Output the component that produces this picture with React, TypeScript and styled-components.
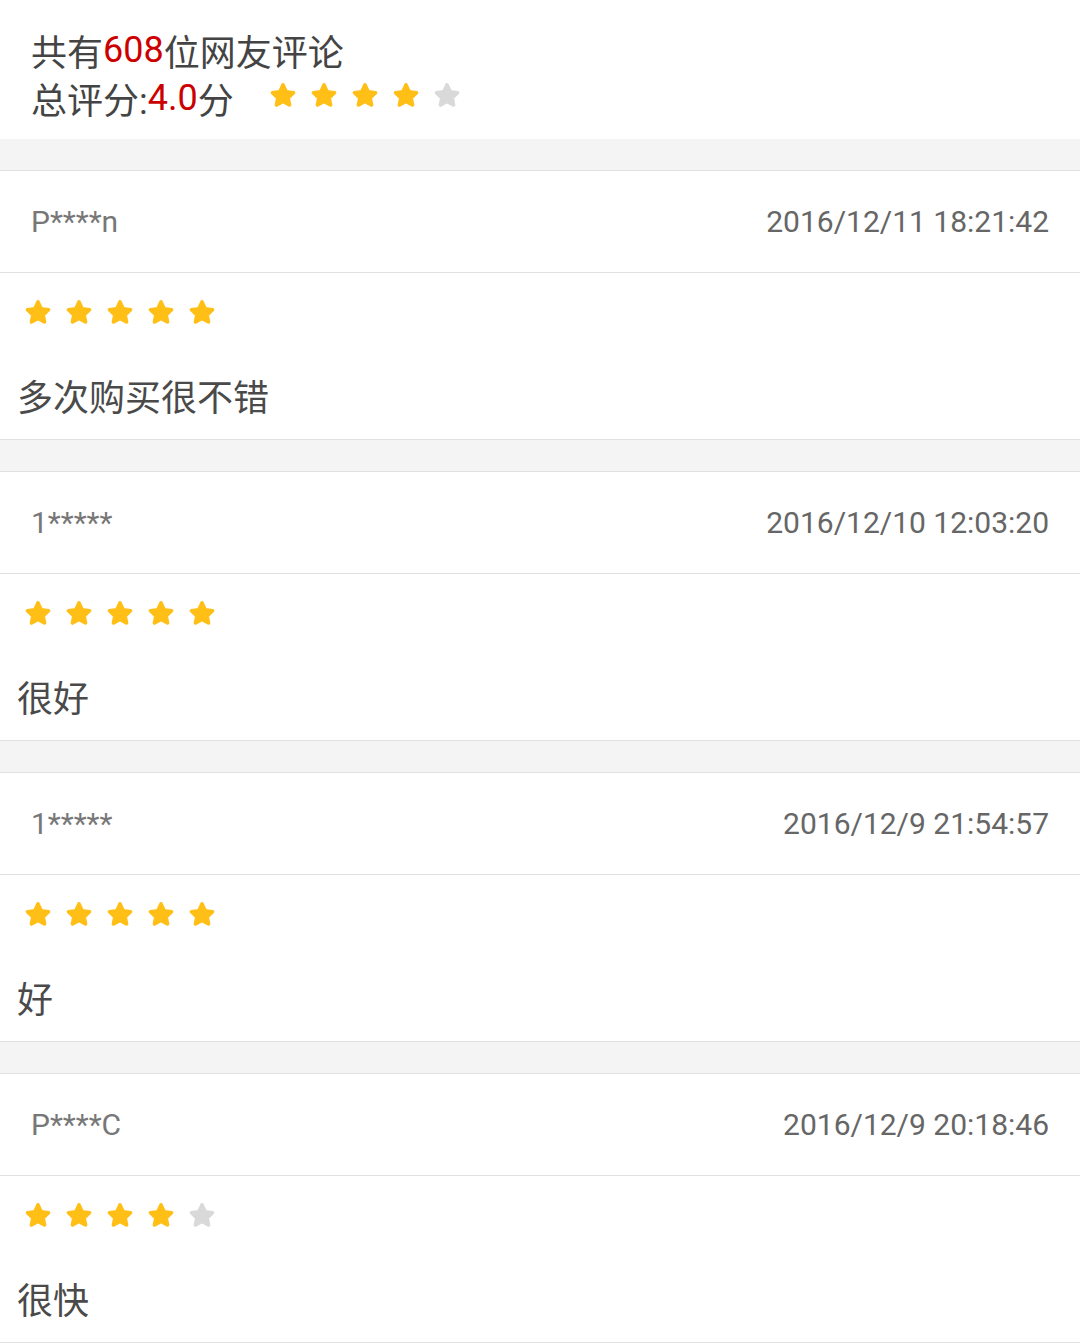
import React from 'react';
import styled, { createGlobalStyle } from 'styled-components';

type Review = {
  user: string;
  time: string;
  score: number;
  text: string;
};

const reviews: Array<Review> = [
  { user: 'P****n', time: '2016/12/11 18:21:42', score: 5, text: '多次购买很不错' },
  { user: '1*****', time: '2016/12/10 12:03:20', score: 5, text: '很好' },
  { user: '1*****', time: '2016/12/9 21:54:57', score: 5, text: '好' },
  { user: 'P****C', time: '2016/12/9 20:18:46', score: 4, text: '很快' },
];

// rounded five point star, chubby inner radius
const STAR_POINTS =
  '12,2.8 14.9,9.1 21.7,9.9 16.7,14.6 18.0,21.2 12,17.9 6.0,21.2 7.3,14.6 2.3,9.9 9.1,9.1';

function Star({ on }: { on: boolean }) {
  const color = on ? '#ffbf16' : '#d9d9d9';
  return (
    <StarSvg viewBox="0 0 24 24">
      <polygon points={STAR_POINTS} fill={color} stroke={color} strokeWidth={3.4} strokeLinejoin="round" />
    </StarSvg>
  );
}

function Stars({ score }: { score: number }) {
  return (
    <StarRow>
      {[1, 2, 3, 4, 5].map((n) => (
        <Star key={n} on={n <= score} />
      ))}
    </StarRow>
  );
}

function App() {
  return (
    <>
      <GlobalStyle />
      <Page>
        {/* summary at the top */}
        <Summary>
          <SummaryLine>
            共有<Red>608</Red>位网友评论
          </SummaryLine>
          <SummaryLine>
            总评分:<Red>4.0</Red>分
            <SummaryStars>
              <Stars score={4} />
            </SummaryStars>
          </SummaryLine>
        </Summary>

        {reviews.map((r, i) => (
          <React.Fragment key={i}>
            <Gap />
            <Card>
              <CardHead>
                <User>{r.user}</User>
                <Time>{r.time}</Time>
              </CardHead>
              <CardBody>
                <Stars score={r.score} />
                <Comment>{r.text}</Comment>
              </CardBody>
            </Card>
          </React.Fragment>
        ))}
      </Page>
    </>
  );
}

export default App;

// Styled Components
const GlobalStyle = createGlobalStyle`
  html, body {
    margin: 0;
    padding: 0;
    background: #ffffff;
  }
  body {
    font-family: Roboto, "Noto Sans CJK SC", sans-serif;
  }
`;

const Page = styled.div`
  width: 1080px;
  background: #ffffff;
`;

const Summary = styled.div`
  padding: 26px 31px 17px;
  background: #ffffff;
`;

const SummaryLine = styled.div`
  display: flex;
  align-items: center;
  height: 48px;
  font-size: 36px;
  color: #444444;
  font-family: Roboto, "Noto Sans CJK SC", sans-serif;
  white-space: nowrap;
`;

const Red = styled.span`
  color: #cc0000;
`;

const SummaryStars = styled.div`
  margin-left: 36px;
  padding-bottom: 6px;
`;

const StarRow = styled.div`
  display: flex;
  gap: 15px;
`;

const StarSvg = styled.svg`
  width: 26px;
  height: 26px;
  overflow: visible;
  display: block;
`;

const Gap = styled.div`
  height: 31px;
  background: #f4f4f4;
`;

const Card = styled.div`
  border-top: 1px solid #e0e0e0;
  border-bottom: 1px solid #e0e0e0;
  background: #ffffff;
`;

const CardHead = styled.div`
  display: flex;
  justify-content: space-between;
  align-items: center;
  height: 101px;
  padding: 0 31px;
  border-bottom: 1px solid #e0e0e0;
  font-size: 30px;
`;

const User = styled.span`
  color: #777777;
`;

const Time = styled.span`
  color: #666666;
`;

const CardBody = styled.div`
  padding: 26px 19px 16px 25px;
  height: 166px;
  box-sizing: border-box;
`;

const Comment = styled.div`
  margin-top: 49px;
  margin-left: -8px;
  font-size: 36px;
  line-height: 50px;
  color: #4a4a4a;
`;
